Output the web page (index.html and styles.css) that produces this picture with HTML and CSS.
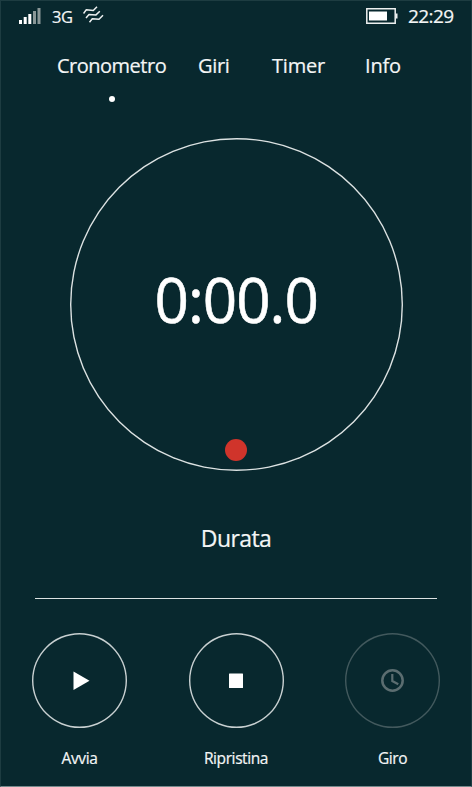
FILE: index.html
```html
<!DOCTYPE html>
<html lang="it">
<head>
<meta charset="utf-8">
<title>Cronometro</title>
<link rel="stylesheet" href="styles.css">
</head>
<body>
<div class="phone">
  <header class="status">
    <svg class="signal" width="22" height="18" viewBox="0 0 22 18">
      <path fill="#fff" d="M0 14h3v4H0zM4.700 11h3v7h-3zM9.300 8h3v10h-3z"/>
      <path fill="#899797" d="M14 5h3v13h-3zM18.500 2h3v16h-3z"/>
    </svg>
    <span class="network">3G</span>
    <svg class="waves" width="22" height="20" viewBox="0 0 22 20">
      <g fill="none" stroke="#edf0f0" stroke-width="1.500" stroke-linejoin="round">
        <path d="M.5 7.500L3.300 3.800L10.300 4.500L14 .700"/>
        <path d="M3 12L6 8.400L13 8.900L16.800 5.200"/>
        <path d="M6.500 16.300L9.300 12.800L16 13.300L20 9.300"/>
      </g>
    </svg>
    <svg class="battery" width="32" height="17" viewBox="0 0 32 17">
      <path d="M.8.800h28.400v14.400H.8z" fill="none" stroke="#edf0f0" stroke-width="1.500"/>
      <path d="M3 3.500h18v9H3z" fill="#fff"/>
      <path d="M29.500 5.500h2v5h-2z" fill="#edf0f0"/>
    </svg>
    <span class="clock">22:29</span>
  </header>
  <nav class="tabs">
    <a class="tab tab-main active">Cronometro</a>
    <a class="tab tab-laps">Giri</a>
    <a class="tab tab-timer">Timer</a>
    <a class="tab tab-info">Info</a>
  </nav>
  <main class="dial">
    <span class="time">0:00.0</span>
    <span class="marker"></span>
  </main>
  <h1 class="duration">Durata</h1>
  <div class="controls">
    <div class="control">
      <button class="round"><svg width="95" height="95" viewBox="0 0 95 95"><path fill="#fff" d="M41.500 38.500v18.500l16-9.200z"/></svg></button>
      <span class="label">Avvia</span>
    </div>
    <div class="control">
      <button class="round"><svg width="95" height="95" viewBox="0 0 95 95"><rect x="40" y="40.500" width="14" height="14.500" rx=".5" fill="#fff"/></svg></button>
      <span class="label">Ripristina</span>
    </div>
    <div class="control">
      <button class="round disabled"><svg width="95" height="95" viewBox="0 0 95 95"><g fill="none" stroke="#5b6d70" stroke-width="2.500"><circle cx="47.500" cy="47.500" r="10.200"/><path d="M47.300 41v7l6 3.200" stroke-width="2.200"/></g></svg></button>
      <span class="label">Giro</span>
    </div>
  </div>
</div>
</body>
</html>
```
FILE: styles.css
```css
* { box-sizing: border-box; }
body {
  margin: 0;
  background: #08282e;
  color: #f4f6f6;
  font-family: "Open Sans", "Noto Sans", sans-serif;
  -webkit-text-stroke: .2px currentColor;
}
.phone {
  height: 787px;
  border: 1px solid #1d3c41;
  border-bottom: 1px solid #748a8c;
  overflow: hidden;
}
.status {
  display: flex;
  height: 31px;
  padding: 5px 17px 0 18px;
  align-items: flex-start;
}
.network, .clock { line-height: 22px; white-space: nowrap; }
.network { margin-left: 11px; width: 22px; font-size: 16.500px; letter-spacing: -.5px; }
.waves { margin-left: 9px; }
.battery { margin: 2px 10px 0 auto; }
.clock { margin-top: -1px; width: 46px; font-size: 19px; letter-spacing: -.6px; }
.tabs { display: flex; height: 106px; padding: 21px 0 0 56px; }
.tab { position: relative; height: 26px; font-size: 20px; line-height: 26px; white-space: nowrap; }
.tab-main { width: 141px; letter-spacing: -.5px; }
.tab-laps { width: 74px; letter-spacing: -.3px; }
.tab-timer { width: 93px; letter-spacing: -.2px; }
.tab-info { letter-spacing: -.2px; }
.active::after {
  content: "";
  position: absolute;
  top: 43px;
  left: 51.500px;
  width: 6px;
  height: 6px;
  border-radius: 50%;
  background: #fff;
}
.dial {
  position: relative;
  width: 333px;
  height: 333px;
  margin: 0 auto;
  box-shadow: inset 0 0 0 1.400px #dce2e2;
  border-radius: 50%;
  display: flex;
  justify-content: center;
}
.time {
  margin-top: 119px;
  height: 84px;
  font-size: 62px;
  line-height: 84px;
  color: #fff;
  letter-spacing: -1px;
  transform: scaleX(.97);
  -webkit-text-stroke-width: .6px;
}
.marker {
  position: absolute;
  bottom: 10px;
  left: 155px;
  width: 22px;
  height: 22px;
  border-radius: 50%;
  background: #d0342b;
}
.duration {
  margin: 51px 0 0;
  height: 32px;
  font-size: 23px;
  line-height: 32px;
  font-weight: 400;
  text-align: center;
  letter-spacing: -.6px;
}
.controls {
  display: flex;
  justify-content: space-between;
  margin: 44px 34px 0;
  border-top: 1px solid #dce2e2;
  padding-top: 34px;
}
.control { display: flex; flex-direction: column; align-items: center; width: 95px; }
.control:first-child { margin-left: -3px; }
.control:last-child { margin-right: -3px; }
.round {
  width: 95px;
  height: 95px;
  padding: 0;
  border: 0;
  border-radius: 50%;
  background: none;
  box-shadow: inset 0 0 0 1.400px #c8d0d1;
}
.round svg { display: block; }
.disabled { box-shadow: inset 0 0 0 1.400px #42595d; }
.label { margin-top: 19px; height: 22px; font-size: 15.500px; line-height: 22px; letter-spacing: -.4px; white-space: nowrap; }
```
